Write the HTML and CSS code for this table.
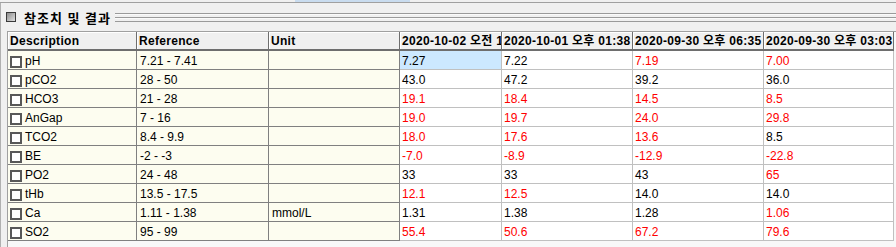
FILE: index.html
```html
<!DOCTYPE html>
<html lang="ko">
<head>
<meta charset="utf-8">
<link rel="stylesheet" href="styles.css">
</head>
<body>
<div class="topstrip"><div class="blur"></div></div>
<div class="panel">
  <div class="title-row">
    <span class="title-box"></span>
    <span class="title">참조치 및 결과</span>
    <span class="rules"></span>
  </div>
  <div class="grid-wrap">
    <div class="grid">
      <div class="th">Description</div>
      <div class="th">Reference</div>
      <div class="th">Unit</div>
      <div class="th">2020-10-02 오전 10:12</div>
      <div class="th">2020-10-01 오후 01:38</div>
      <div class="th">2020-09-30 오후 06:35</div>
      <div class="th">2020-09-30 오후 03:03</div>

      <div class="lc desc"><span class="cb"></span>pH</div><div class="lc">7.21 - 7.41</div><div class="lc"></div>
      <div class="dc sel">7.27</div><div class="dc">7.22</div><div class="dc hi">7.19</div><div class="dc hi">7.00</div>

      <div class="lc desc"><span class="cb"></span>pCO2</div><div class="lc">28 - 50</div><div class="lc"></div>
      <div class="dc">43.0</div><div class="dc">47.2</div><div class="dc">39.2</div><div class="dc">36.0</div>

      <div class="lc desc"><span class="cb"></span>HCO3</div><div class="lc">21 - 28</div><div class="lc"></div>
      <div class="dc hi">19.1</div><div class="dc hi">18.4</div><div class="dc hi">14.5</div><div class="dc hi">8.5</div>

      <div class="lc desc"><span class="cb"></span>AnGap</div><div class="lc">7 - 16</div><div class="lc"></div>
      <div class="dc hi">19.0</div><div class="dc hi">19.7</div><div class="dc hi">24.0</div><div class="dc hi">29.8</div>

      <div class="lc desc"><span class="cb"></span>TCO2</div><div class="lc">8.4 - 9.9</div><div class="lc"></div>
      <div class="dc hi">18.0</div><div class="dc hi">17.6</div><div class="dc hi">13.6</div><div class="dc">8.5</div>

      <div class="lc desc"><span class="cb"></span>BE</div><div class="lc">-2 - -3</div><div class="lc"></div>
      <div class="dc hi">-7.0</div><div class="dc hi">-8.9</div><div class="dc hi">-12.9</div><div class="dc hi">-22.8</div>

      <div class="lc desc"><span class="cb"></span>PO2</div><div class="lc">24 - 48</div><div class="lc"></div>
      <div class="dc">33</div><div class="dc">33</div><div class="dc">43</div><div class="dc hi">65</div>

      <div class="lc desc"><span class="cb"></span>tHb</div><div class="lc">13.5 - 17.5</div><div class="lc"></div>
      <div class="dc hi">12.1</div><div class="dc hi">12.5</div><div class="dc">14.0</div><div class="dc">14.0</div>

      <div class="lc desc"><span class="cb"></span>Ca</div><div class="lc">1.11 - 1.38</div><div class="lc">mmol/L</div>
      <div class="dc">1.31</div><div class="dc">1.38</div><div class="dc">1.28</div><div class="dc hi">1.06</div>

      <div class="lc desc"><span class="cb"></span>SO2</div><div class="lc">95 - 99</div><div class="lc"></div>
      <div class="dc hi">55.4</div><div class="dc hi">50.6</div><div class="dc hi">67.2</div><div class="dc hi">79.6</div>
    </div>
  </div>
</div>
</body>
</html>
```
FILE: styles.css
```css
html, body {
  margin: 0;
  padding: 0;
  background: #f0f0f0;
  font-family: "Liberation Sans", Arial, "Noto Sans CJK KR", sans-serif;
  font-size: 12px;
  color: #000;
  overflow: hidden;
}

.topstrip {
  height: 2px;
  padding-left: 295px;
  border-bottom: 1px solid #a0a0a0;
}

.blur {
  width: 115px;
  height: 2px;
  background: #c9dcef;
}

.panel {
  border-left: 1px solid #b0b0b0;
  height: 244px;
}

.title-row {
  display: flex;
  align-items: center;
  height: 28px;
  padding-left: 5px;
}

.title-box {
  width: 10px;
  height: 10px;
  box-sizing: border-box;
  border: 1px solid #3a3a3a;
  background: linear-gradient(135deg, #8c8c8c, #e0e0e0);
  margin-right: 8px;
}

.title {
  font-family: "Noto Sans CJK KR", sans-serif;
  font-weight: bold;
  font-size: 13px;
  letter-spacing: 1px;
  margin-right: 4px;
}

.rules {
  flex: 1;
  height: 9px;
  background: linear-gradient(#9a9a9a 0 1px, #fafafa 1px 2px, transparent 2px 4px,
    #9a9a9a 4px 5px, #fafafa 5px 6px, transparent 6px 8px, #9a9a9a 8px 9px);
}

.grid-wrap {
  margin-left: 6px;
  border-left: 1px solid #a0a0a0;
  border-top: 1px solid #a0a0a0;
  background: #f8f8f8;
  height: 220px;
}

.grid {
  display: grid;
  grid-template-columns: 129px 132px 131px 102px 131px 131px 130px;
  grid-auto-rows: 19px;
}

.th {
  box-sizing: border-box;
  background: #f0f0f0;
  font-weight: bold;
  padding: 2px 0 0 2px;
  line-height: 15px;
  letter-spacing: 0.3px;
  white-space: nowrap;
  overflow: hidden;
  border-right: 1px solid #6e6e6e;
  border-bottom: 2px solid #6e6e6e;
  box-shadow: inset 1px 1px 0 #ffffff;
}

.lc {
  box-sizing: border-box;
  background: #fdfdf0;
  border-right: 1px solid #808080;
  border-bottom: 1px solid #808080;
  padding: 2px 0 0 3px;
  line-height: 16px;
  white-space: nowrap;
  overflow: hidden;
}

.desc {
  display: flex;
  align-items: center;
  padding: 0 0 0 2px;
}

.desc-text {
  display: inline;
}

.cb {
  width: 12px;
  height: 12px;
  box-sizing: border-box;
  border: 2px solid #585858;
  background: #fff;
  margin: 1px 3px 0 0;
}

.desc {
  padding-top: 2px;
}

.dc {
  box-sizing: border-box;
  background: #fff;
  border-right: 1px solid #c0c0c0;
  border-bottom: 1px solid #c0c0c0;
  padding: 2px 0 0 2px;
  line-height: 16px;
  white-space: nowrap;
  overflow: hidden;
}

.dc.sel {
  background: #cce8ff;
}

.dc.hi {
  color: #ff0000;
}
```
